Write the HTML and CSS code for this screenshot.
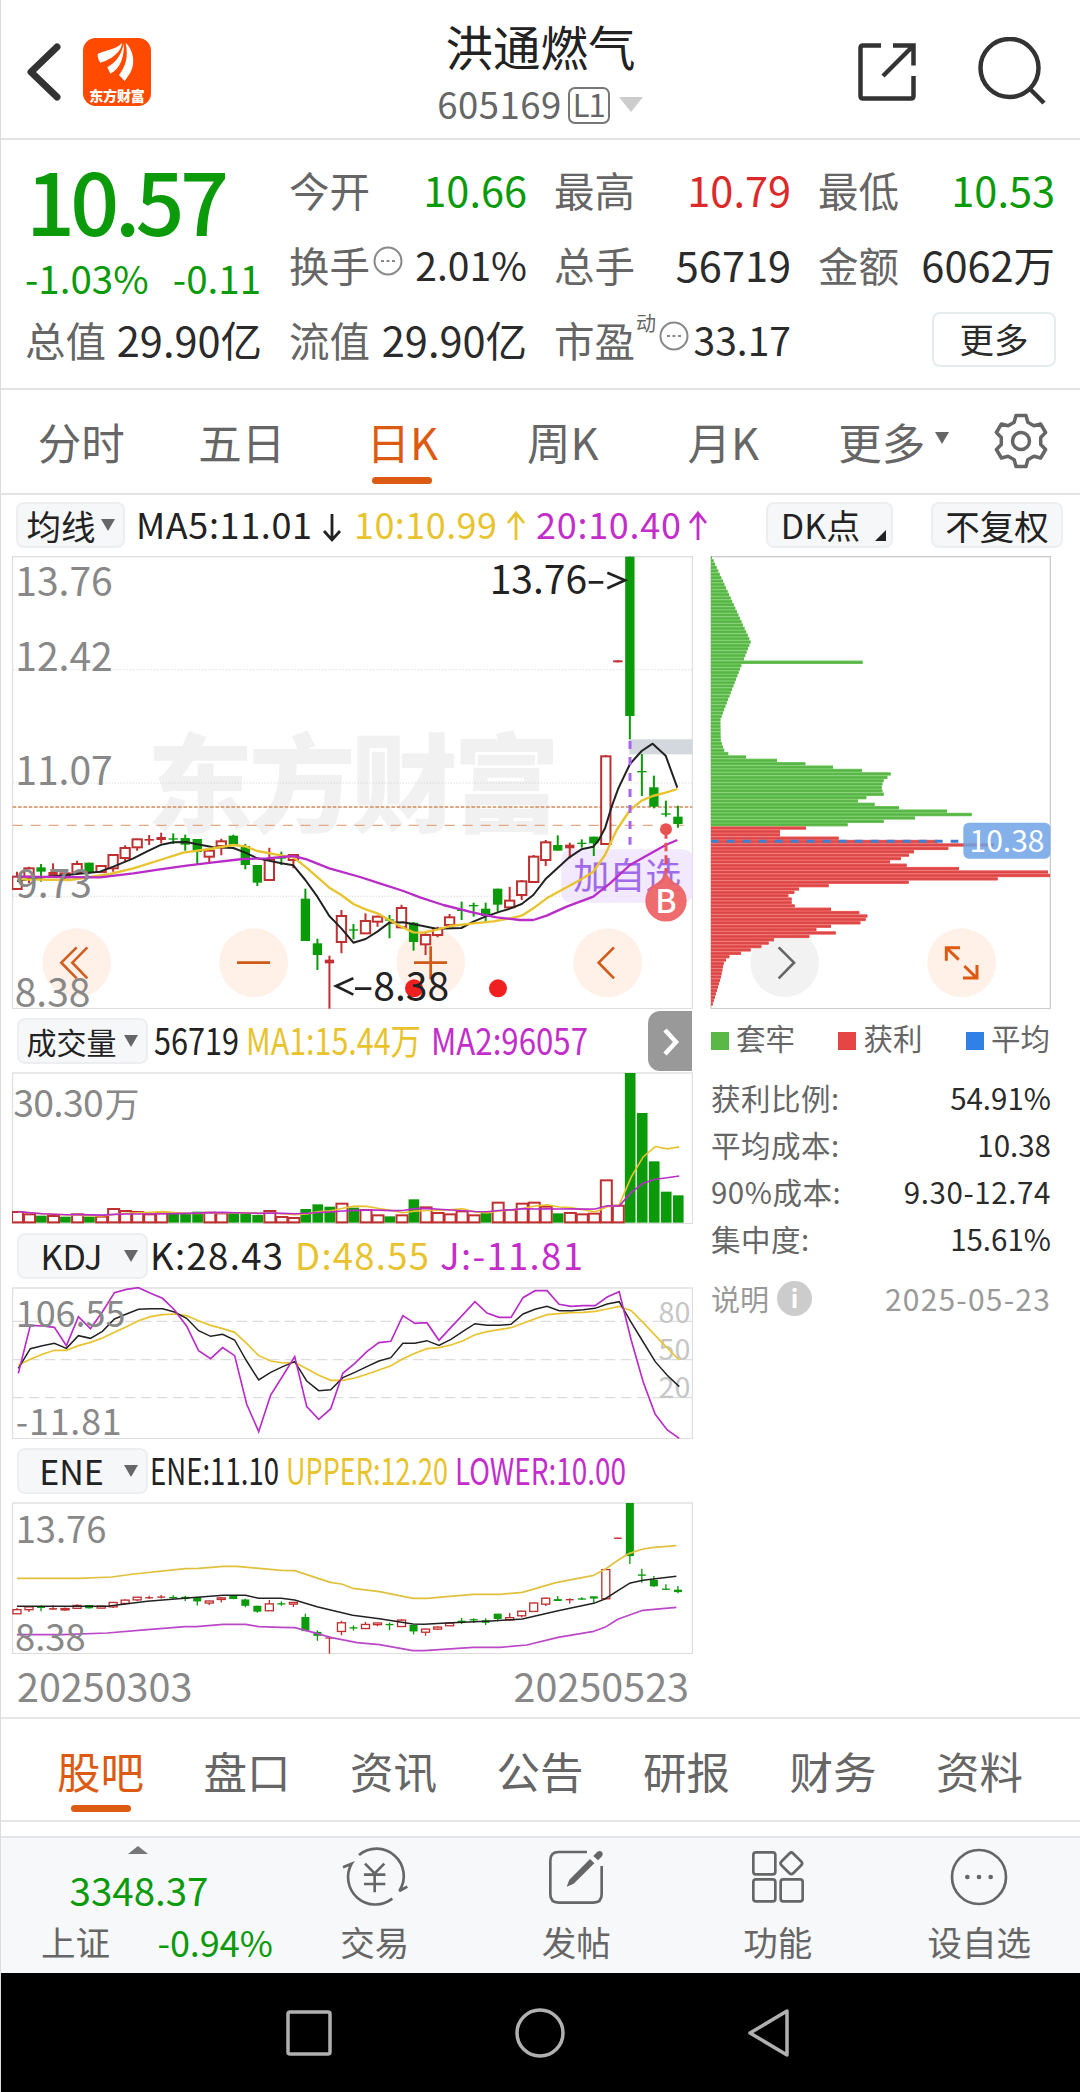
FILE: index.html
```html
<!DOCTYPE html>
<html lang="zh-CN">
<head>
    <meta charset="UTF-8">
    <title>洪通燃气 605169</title>
    <link rel="stylesheet" href="styles.css">
</head>
<body>
<div id="page">
    <div class="header">
        <div class="header-left">
            <svg class="back" viewBox="0 0 36 60"><path d="M31 5 L5 30 L31 55"/></svg>
            <svg class="logo" viewBox="250 84 204 204">
                <rect x="250" y="84" width="204" height="204" rx="38" fill="#ff4a00"/>
                <path fill="#fff" d="M294 132C320 118 345 122 367 99C366 126 332 150 302 158C296 150 294 142 294 132Z"/>
                <path fill="#fff" d="M372 100C376 135 362 178 332 191L323 172C348 158 366 135 372 100Z"/>
                <path fill="#fff" d="M378 98C402 120 408 160 392 188L375 213L358 195C380 165 386 140 378 98Z"/>
                <text x="269" y="272" font-size="42" font-weight="900" fill="#fff" textLength="166">东方财富</text>
            </svg>
        </div>
        <div class="header-title">
            <h1>洪通燃气</h1>
            <div class="code"><span>605169</span><i>L1</i><b class="down"></b></div>
        </div>
        <div class="header-right">
            <svg class="share" viewBox="0 0 58 58">
                <path d="M23 2.500H5Q2.500 2.500 2.500 5V53Q2.500 55.500 5 55.500H53Q55.500 55.500 55.500 53V33"/>
                <path d="M35 2.500H55.500V22.500M55 3L25 33"/>
            </svg>
            <svg class="search" viewBox="0 0 70 70"><circle cx="31.500" cy="31" r="29"/><path d="M52 52L66 66"/></svg>
        </div>
    </div>

    <div class="quote">
        <div class="price">
            <div class="now">10.57</div>
            <div class="change"><span>-1.03%</span><span>-0.11</span></div>
        </div>
        <div class="cell"><label>今开</label><span class="green">10.66</span></div>
        <div class="cell"><label>最高</label><span class="red">10.79</span></div>
        <div class="cell"><label>最低</label><span class="green">10.53</span></div>
        <div class="cell tight"><label>换手<svg class="dots" viewBox="0 0 30 30"><circle cx="15" cy="15" r="13.500"/><path d="M8 15h3M13.500 15h3M19 15h3"/></svg></label><span>2.01%</span></div>
        <div class="cell"><label>总手</label><span>56719</span></div>
        <div class="cell"><label>金额</label><span>6062万</span></div>
        <div class="cell"><label>总值</label><span>29.90亿</span></div>
        <div class="cell"><label>流值</label><span>29.90亿</span></div>
        <div class="cell tight"><label>市盈<sup>动</sup><svg class="dots" viewBox="0 0 30 30"><circle cx="15" cy="15" r="13.500"/><path d="M8 15h3M13.500 15h3M19 15h3"/></svg></label><span>33.17</span></div>
        <div class="cell more"><a>更多</a></div>
    </div>

    <ul class="period">
        <li>分时</li>
        <li>五日</li>
        <li class="selected">日K</li>
        <li>周K</li>
        <li>月K</li>
        <li class="other">更多<b class="down"></b></li>
        <li class="set"><svg class="gear" viewBox="-29 -29 58 58">
            <path d="M-5 -25.500H5L6.800 -18.800L12.900 -15.300L19.600 -17L24.600 -8.500L19.700 -3.500V3.500L24.600 8.500L19.600 17L12.900 15.300L6.800 18.800L5 25.500H-5L-6.800 18.800L-12.900 15.300L-19.600 17L-24.600 8.500L-19.700 3.500V-3.500L-24.600 -8.500L-19.600 -17L-12.900 -15.300L-6.800 -18.800Z"/>
            <circle r="8.500"/>
        </svg></li>
    </ul>

    <div class="toolbar">
        <a class="btn avg">均线<b class="down"></b></a>
        <svg class="legend ma" viewBox="136 0 600 62">
            <text x="135" y="45" textLength="176">MA5:11.01</text>
            <path d="M331 20V45M323 37L331 46L339 37" stroke="#222"/>
            <text x="353" y="45" textLength="143" class="yellow">10:10.99</text>
            <path d="M515 46V20M507 29L515 19L523 29" stroke="#e8c32e"/>
            <text x="535" y="45" textLength="145" class="purple">20:10.40</text>
            <path d="M697 46V20M689 29L697 19L705 29" stroke="#c32ecb"/>
        </svg>
        <a class="btn dk">DK点<b></b></a>
        <a class="btn fq">不复权</a>
    </div>

    <div class="main">
        <div class="left">
            <svg id="kline" class="chart" viewBox="36 18 2043 1359"></svg>
            <div class="sub-head">
                <a class="btn"><span>成交量</span><b class="down"></b></a>
                <svg class="legend" viewBox="148 0 500 63">
                    <text x="154" y="46" textLength="85" lengthAdjust="spacingAndGlyphs">56719</text>
                    <text x="246" y="46" textLength="175" lengthAdjust="spacingAndGlyphs" class="yellow">MA1:15.44万</text>
                    <text x="431" y="46" textLength="157" lengthAdjust="spacingAndGlyphs" class="purple">MA2:96057</text>
                </svg>
                <a class="next"><svg viewBox="0 0 44 60"><path d="M17 19L28 31L17 43"/></svg></a>
            </div>
            <svg id="volume" class="chart sub" viewBox="36 186 2043 456"></svg>
            <div class="sub-head">
                <a class="btn en"><span>KDJ</span><b class="down"></b></a>
                <svg class="legend" viewBox="148 0 500 63">
                    <text x="150" y="46" textLength="133">K:28.43</text>
                    <text x="295" y="46" textLength="134" class="yellow">D:48.55</text>
                    <text x="440" y="46" textLength="143" class="purple">J:-11.81</text>
                </svg>
            </div>
            <svg id="kdj" class="chart sub" viewBox="36 831 2043 456"></svg>
            <div class="sub-head">
                <a class="btn en"><span>ENE</span><b class="down"></b></a>
                <svg class="legend" viewBox="148 0 500 63">
                    <text x="150" y="46" textLength="129" lengthAdjust="spacingAndGlyphs">ENE:11.10</text>
                    <text x="286" y="46" textLength="162" lengthAdjust="spacingAndGlyphs" class="yellow">UPPER:12.20</text>
                    <text x="455" y="46" textLength="171" lengthAdjust="spacingAndGlyphs" class="purple">LOWER:10.00</text>
                </svg>
            </div>
            <svg id="ene" class="chart sub" viewBox="36 186 2043 456"></svg>
            <div class="dates"><span>20250303</span><span>20250523</span></div>
        </div>
        <div class="right">
            <svg id="chips" class="chart" viewBox="30 18 1023 1359"></svg>
            <div class="keys"><span><i class="k1"></i>套牢</span><span><i class="k2"></i>获利</span><span><i class="k3"></i>平均</span></div>
            <dl>
                <dt>获利比例:</dt><dd>54.91%</dd>
                <dt>平均成本:</dt><dd>10.38</dd>
                <dt>90%成本:</dt><dd class="wide">9.30-12.74</dd>
                <dt>集中度:</dt><dd>15.61%</dd>
            </dl>
            <div class="note"><span>说明<i>i</i></span><span class="day">2025-05-23</span></div>
        </div>
    </div>

    <ul class="tabs">
        <li class="selected">股吧</li>
        <li>盘口</li>
        <li>资讯</li>
        <li>公告</li>
        <li>研报</li>
        <li>财务</li>
        <li>资料</li>
    </ul>

    <div class="footer">
        <div class="index">
            <b class="up"></b>
            <div class="point">3348.37</div>
            <div class="rate"><span>上证</span><em>-0.94%</em></div>
        </div>
        <a><svg viewBox="0 0 204 180">
            <path d="M54 24A82 82 0 0 1 175 132L199 119M154 155A82 82 0 0 1 32 50L6 61"/>
            <path d="M72 50L101 79L130 50M69 83H133M69 111H133M101 79V136"/>
        </svg>交易</a>
        <a><svg viewBox="610 48 204 180">
            <path d="M745 63H660Q635 63 635 88V190Q635 215 660 215H764Q789 215 789 190V105"/>
            <path class="fill" d="M684 167L692 146L754 84L767 97L705 158ZM764 75L773 65Q782 56 790 63Q795 70 788 78L778 88Z"/>
        </svg>发帖</a>
        <a><svg viewBox="1213 50 204 180">
            <rect x="1241" y="66" width="66" height="66" rx="8"/>
            <rect x="1241" y="147" width="66" height="66" rx="8"/>
            <rect x="1323" y="147" width="66" height="66" rx="8"/>
            <rect x="1330" y="74" width="50" height="50" rx="8" transform="rotate(45 1355 99)"/>
        </svg>功能</a>
        <a><svg viewBox="0 0 204 180">
            <circle cx="102" cy="90" r="81"/>
            <path class="fill" d="M60 90a7 7 0 1 0 14 0a7 7 0 1 0 -14 0M95 90a7 7 0 1 0 14 0a7 7 0 1 0 -14 0M130 90a7 7 0 1 0 14 0a7 7 0 1 0 -14 0"/>
        </svg>设自选</a>
    </div>

    <div class="sysbar">
        <svg viewBox="0 0 50 50"><rect x="4" y="4" width="42" height="42" rx="2"/></svg>
        <svg viewBox="0 0 50 50"><circle cx="25" cy="25" r="23"/></svg>
        <svg viewBox="0 0 50 50"><path d="M4 25L41 3V47Z"/></svg>
    </div>
</div>
<script src="chart.js"></script>
</body>
</html>
```

FILE: styles.css
```css
*{
    margin: 0;
    padding: 0;
    box-sizing: border-box;
}
ul{
    list-style: none;
}
i,em{
    font-style: normal;
}
body{
    background: #fff;
    color: #2b2b2b;
    font-family: "Noto Sans CJK SC", "Noto Sans", sans-serif;
}
#page{
    width: 1080px;
    height: 2092px;
    overflow: hidden;
    border-left: 1px solid #dcdcdc;
}
svg{
    display: block;
    fill: none;
    flex: none;
}
.green{
    color: #0a9a0a;
}
.red{
    color: #dc2a2a;
}
.down{
    display: inline-block;
    border: 7px solid transparent;
    border-top: 12px solid #666;
    border-bottom: 0;
}

/* 顶部标题 */
.header{
    display: grid;
    grid-template-columns: 300px 1fr 300px;
    height: 140px;
    border-bottom: 2px solid #e3e3e3;
}
.header-left{
    display: flex;
    align-items: center;
    padding: 5px 0 0 25px;
}
.back{
    width: 36px;
    height: 60px;
    stroke: #333;
    stroke-width: 7;
    stroke-linecap: round;
    stroke-linejoin: round;
}
.logo{
    width: 68px;
    height: 68px;
    margin-left: 21px;
}
.header-title{
    text-align: center;
}
.header-title h1{
    margin-top: 14px;
    font-size: 47.500px;
    line-height: 64px;
    font-weight: normal;
    color: #222;
}
.code{
    display: flex;
    justify-content: center;
    align-items: center;
    height: 52px;
    font-size: 36.500px;
    line-height: 52px;
    letter-spacing: .5px;
    color: #666;
}
.code span{
    margin-left: -1px;
}
.code i{
    width: 42px;
    height: 37px;
    margin: 2px 0 0 6px;
    border: 2px solid #777;
    border-radius: 7px;
    font-size: 31px;
    line-height: 29px;
    letter-spacing: -1px;
}
.code .down{
    margin: 1px 0 0 9px;
    border-width: 15px 12px 0;
    border-top-color: #ccc;
}
.header-right{
    display: flex;
    align-items: center;
    gap: 62px;
    padding: 5px 0 0 78px;
}
.share,.search{
    stroke: #333;
    stroke-width: 4.500;
}
.share{
    width: 58px;
    height: 58px;
}
.search{
    width: 70px;
    height: 70px;
}

/* 报价 */
.quote{
    display: grid;
    grid-template-columns: 237px 238px 237px 237px;
    grid-auto-rows: 75px;
    column-gap: 27px;
    height: 250px;
    padding: 12px 0 0 24px;
    border-bottom: 2px solid #e3e3e3;
    font-size: 41.500px;
    line-height: 75px;
}
.price{
    grid-row: span 2;
    color: #0a9a0a;
}
.now{
    height: 95px;
    padding-left: 1px;
    font-size: 86px;
    font-weight: 500;
    line-height: 94px;
    letter-spacing: -4.700px;
}
.change{
    display: flex;
    justify-content: space-between;
    padding: 0 1px 0 0;
    font-size: 38.500px;
    line-height: 60px;
}
.cell{
    display: flex;
    justify-content: space-between;
    white-space: nowrap;
}
.cell label{
    display: flex;
    align-items: center;
    font-size: 40.500px;
    color: #666;
}
.cell sup{
    width: 20px;
    height: 62px;
    margin-left: 1px;
    font-size: 20px;
    line-height: 28px;
}
.cell.tight{
    font-size: 39px;
}
.dots{
    width: 30px;
    height: 30px;
    margin: -8px 0 0 3px;
    stroke: #888;
    stroke-width: 2;
}
.cell.more{
    justify-content: flex-end;
    align-items: center;
}
.more a{
    width: 124px;
    height: 55px;
    margin: 0 -1px 0 0;
    border: 2px solid #e6ebee;
    border-radius: 8px;
    font-size: 34.500px;
    line-height: 48px;
    text-align: center;
}

/* 周期 */
.period{
    display: flex;
    height: 105px;
    border-bottom: 2px solid #e3e3e3;
    font-size: 43.500px;
    line-height: 101px;
    color: #666;
}
.period li{
    display: flex;
    justify-content: center;
    align-items: center;
    width: 160.500px;
    height: 102px;
}
.period .down{
    margin: -6px 0 0 10px;
    border-width: 12px 7px 0;
}
.period .other{
    padding-left: 20px;
}
.period .set{
    width: 58px;
    margin-left: 28px;
}
.selected{
    position: relative;
    color: #dc5a12;
}
.selected:after{
    content: "";
    position: absolute;
    left: 50%;
    bottom: 8px;
    width: 60px;
    height: 7px;
    margin-left: -30px;
    border-radius: 4px;
    background: #dc5a12;
}
.gear{
    width: 58px;
    height: 58px;
    stroke: #666;
    stroke-width: 3.500;
    stroke-linejoin: round;
}
.toolbar{
    display: flex;
    align-items: center;
    height: 61px;
    padding: 0 15px 2px 15px;
}
.btn{
    display: flex;
    flex: none;
    justify-content: center;
    align-items: center;
    width: 131px;
    height: 46px;
    border: 2px solid #eceef0;
    border-radius: 8px;
    background: #f6f7f9;
    font-size: 30px;
    line-height: 40px;
    color: #222;
}
.btn span{
    flex: 1;
    text-align: center;
}
.btn.en{
    font-size: 34px;
}
.btn.avg{
    width: 109px;
    font-size: 34.500px;
}
.btn.avg .down{
    margin-left: 5px;
}
.btn.dk{
    position: relative;
    width: 127px;
    margin-left: 29px;
    padding-right: 18px;
    font-size: 34px;
}
.btn.dk b{
    position: absolute;
    right: 5px;
    bottom: 5px;
    border-left: 11px solid transparent;
    border-bottom: 11px solid #222;
}
.btn.fq{
    width: 132px;
    margin-left: 38px;
    font-size: 34.500px;
}
.legend{
    width: 500px;
    height: 63px;
    fill: #222;
    font-size: 36.500px;
    overflow: visible;
}
.legend path{
    fill: none;
    stroke-width: 2.800;
}
.legend.ma{
    width: 600px;
    height: 62px;
    margin-left: 12px;
    font-size: 36px;
}
.yellow{
    fill: #e8c32e;
}
.purple{
    fill: #c32ecb;
}

/* 图表 */
.main{
    display: flex;
    gap: 17px;
    height: 1161px;
    padding-left: 11px;
}
.left{
    width: 681px;
}
.chart{
    width: 681px;
    height: 453px;
}
.chart.sub{
    height: 152px;
}
.right .chart{
    width: 341px;
}
.sub-head{
    display: flex;
    align-items: center;
    height: 63px;
    padding-left: 5px;
}
.sub-head .down{
    margin-right: 8px;
}
.next{
    width: 44px;
    height: 60px;
    border-radius: 12px 0 0 12px;
    background: #999;
}
.next path{
    stroke: #fff;
    stroke-width: 4.500;
}
.dates{
    display: flex;
    justify-content: space-between;
    padding: 0 4px 0 5px;
    font-size: 39.500px;
    line-height: 61px;
    color: #888;
}
.right{
    width: 341px;
}
.keys{
    display: flex;
    justify-content: space-between;
    height: 61px;
    padding: 0 1px 0 1px;
    font-size: 29.500px;
    line-height: 56px;
    color: #666;
}
.keys i{
    display: inline-block;
    width: 18px;
    height: 18px;
    margin-right: 7px;
}
.k1{
    background: #5ab946;
}
.k2{
    background: #e64545;
}
.k3{
    background: #3080e6;
}
dl{
    display: grid;
    grid-template-columns: auto auto;
    grid-auto-rows: 47px;
    padding: 4px 0 0 1px;
    font-size: 29.500px;
    line-height: 46px;
    color: #666;
}
dt{
    letter-spacing: .5px;
}
dd{
    text-align: right;
    color: #2b2b2b;
}
dd.wide{
    letter-spacing: .6px;
}
.note{
    display: flex;
    justify-content: space-between;
    margin-top: 13px;
    padding: 0 0 0 1px;
    font-size: 29px;
    line-height: 46px;
    color: #999;
}
.note span{
    display: flex;
    align-items: center;
}
.note .day{
    font-size: 30px;
    letter-spacing: 1.200px;
}
.note i{
    width: 35px;
    height: 35px;
    margin-left: 8px;
    border-radius: 50%;
    background: #ccc;
    color: #fff;
    font-size: 25px;
    font-weight: bold;
    line-height: 32px;
    text-align: center;
}

/* 下方栏目 */
.tabs{
    display: flex;
    justify-content: space-between;
    height: 105px;
    padding: 0 57px 0 56px;
    border-top: 2px solid #e6e6e6;
    border-bottom: 2px solid #e6e6e6;
    font-size: 43.500px;
    line-height: 103px;
    color: #666;
}
.footer{
    display: flex;
    height: 137px;
    margin-top: 14px;
    border-top: 2px solid #e3e5e8;
    background: #f7f8fa;
    color: #666;
}
.footer a{
    width: 201.500px;
    font-size: 34.500px;
    line-height: 50px;
    text-align: center;
}
.footer svg{
    width: 68px;
    height: 60px;
    margin: 9px auto;
    stroke: #666;
    stroke-width: 8;
}
.footer .fill{
    fill: #666;
    stroke: none;
}
.index{
    width: 273px;
    text-align: center;
}
.index .up{
    display: block;
    width: 0;
    margin: 8px 0 0 127px;
    border: 10px solid transparent;
    border-top: 0;
    border-bottom: 8px solid #777;
}
.point{
    padding-left: 3px;
    font-size: 38.500px;
    line-height: 56px;
    margin-top: 7px;
    color: #0a9a0a;
}
.rate{
    display: flex;
    justify-content: space-between;
    padding: 0 1px 0 40px;
    font-size: 34.500px;
    line-height: 50px;
    margin-top: -1px;
}
.rate em{
    font-size: 36px;
    color: #0a9a0a;
}
.sysbar{
    display: flex;
    justify-content: center;
    align-items: center;
    gap: 181px;
    height: 120px;
    margin-left: -1px;
    background: #000;
}
.sysbar svg{
    width: 50px;
    height: 50px;
    stroke: #b0b0b0;
    stroke-width: 3.500;
    stroke-linejoin: round;
}
```

FILE: chart.js
```js
var RED = '#c03030', GREEN = '#0a9a0a';
var BLACK = '#222', YELLOW = '#e8c32e', PURPLE = '#b92cc8';

// K线: [颜色, 实体上, 实体下, 最高, 最低]
var aK = [
    ['r',980,1017,965,1020],['r',955,980,950,1000],['g',952,965,942,995],['s',966,980,940,980],
    ['r',970,982,960,990],['r',942,968,932,975],['g',938,968,938,970],['r',948,966,948,968],
    ['r',915,955,912,965],['r',894,924,886,935],['r',868,892,866,902],['s',867,872,855,885],
    ['s',861,870,848,880],['g',865,869,850,882],['g',864,884,854,902],['g',867,906,867,942],
    ['r',902,920,900,937],['r',874,888,866,916],['g',857,884,854,886],['g',888,945,882,958],
    ['g',945,998,945,1008],['r',928,990,893,992],['g',922,926,905,945],['r',915,930,912,955],
    ['g',1046,1173,1016,1173],['g',1180,1215,1166,1260],['s',1229,1240,1217,1376],['r',1098,1176,1080,1210],
    ['g',1138,1142,1122,1168],['r',1113,1150,1090,1150],['r',1100,1115,1097,1130],['g',1108,1112,1095,1165],
    ['r',1074,1132,1064,1135],['g',1118,1176,1116,1202],['r',1155,1183,1150,1215],['r',1137,1155,1130,1162],
    ['r',1102,1125,1092,1128],['g',1079,1081,1055,1110],['g',1065,1069,1058,1100],['g',1076,1098,1058,1118],
    ['g',1016,1064,1016,1085],['r',1052,1072,1010,1075],['r',994,1035,990,1050],['r',920,996,915,998],
    ['r',877,930,870,948],['g',885,902,856,902],['s',884,895,878,925],['g',878,882,868,893],
    ['g',860,880,860,918],['r',619,882,615,885],['s',331,337,331,337],['g',20,498,20,568],
    ['g',663,667,612,738],['g',712,770,677,775],['g',790,794,752,800],['g',800,822,767,833]
];
// 成交量柱顶
var aV = [605,612,617,617,620,612,620,619,596,602,605,612,609,612,612,605,607,609,609,610,615,602,620,623,597,583,590,580,
    593,599,615,619,615,568,591,608,612,603,615,607,577,599,580,577,589,610,608,612,610,510,586,189,309,454,545,556];
var sVC = 'rrgrgrgrrrrrrgggrrgggrrrgggrgrrgrgrrrrrgrrrrrgrrrrrggggg';
// KDJ
var aKv = [1075,1016,1007,1000,1015,977,985,964,927,912,898,896,896,906,925,962,979,973,990,1053,1110,1087,1070,1055,1113,1142,1139,1103,
    1087,1070,1053,1043,1000,1000,992,1006,988,964,941,946,946,943,912,898,889,902,902,899,895,882,875,937,996,1055,1096,1130];
var aDv = [1065,1048,1033,1021,1021,1007,997,984,967,950,932,920,914,912,917,932,946,956,967,1000,1037,1053,1059,1057,1076,1096,1111,1111,
    1104,1093,1080,1067,1046,1030,1016,1013,1005,992,974,965,959,953,940,926,914,911,908,907,904,897,889,902,938,976,1014,1050];
var aJv = [1090,946,948,952,1007,920,956,905,848,838,833,850,865,900,948,1022,1046,1013,1037,1182,1265,1155,1098,1040,1190,1228,1196,1090,
    1060,1025,998,994,917,940,938,991,952,914,875,909,922,922,863,842,842,883,889,887,887,861,845,990,1116,1213,1260,1285];

function x(i){
    return 51 + 36.05 * i;
}
function rect(x, y, w, h, attr){
    return '<rect x="' + x + '" y="' + y + '" width="' + w + '" height="' + h + '" ' + attr + '/>';
}
function path(d, color, w, attr){
    return '<path d="' + d + '" stroke="' + color + '" stroke-width="' + w + '" ' + (attr || '') + '/>';
}
function text(s, x, y, size, color, attr){
    return '<text x="' + x + '" y="' + y + '" font-size="' + size + '" fill="' + color + '" ' + (attr || '') + '>' + s + '</text>';
}
function line(arr, color, w){
    return path('M' + arr.map(function(y, i){ return (x(i) + 4) + ' ' + y; }).join('L'), color, w);
}
function poly(str, color, w, sx){
    return path('M' + str.split(' ').map(function(p){
        p = p.split(',');
        return p[0] * (sx || 1) + ' ' + p[1];
    }).join('L'), color, w, 'stroke-linejoin="round"');
}
function frame(y, h){
    return rect(37.500, y, 2040, h, 'stroke="#ddd" stroke-width="4"');
}
function candles(f, w, lw){
    var html = '';
    for(var i = 0; i < aK.length; i++){
        var k = aK[i], t = f(k[1]), b = f(k[2]), c = k[0] == 'g' ? GREEN : RED, cx = x(i);
        if(k[0] == 'r'){
            html += path('M' + cx + ' ' + f(k[3]) + 'V' + t + 'M' + cx + ' ' + b + 'V' + f(k[4]), c, lw);
            html += rect(cx - w / 2, t, w, Math.max(b - t, 3), 'fill="#fff" stroke="' + c + '" stroke-width="' + lw + '"');
        }else{
            html += path('M' + cx + ' ' + f(k[3]) + 'V' + f(k[4]), c, lw);
            html += rect(cx - w / 2, t, w, Math.max(b - t, 4), 'fill="' + c + '"');
        }
    }
    return html;
}
function round(cx, color){
    return '<circle cx="' + cx + '" cy="1238" r="103" fill="' + color + '"/>';
}

// 主图
function drawK(){
    var s = frame(20, 1356);
    s += text('东方财富', 440, 822, 320, '#f1f1f1', 'font-weight="900" textLength="1240"');
    s += path('M38 359H2077M38 699H2077M38 1039H2077', '#ccc', 2, 'stroke-dasharray="4 5"');
    s += path('M38 771H2077', '#d08a5e', 4, 'stroke-dasharray="11 5"');
    s += path('M38 826H2050', '#e3a985', 4, 'stroke-dasharray="30 24"');
    s += rect(1888, 568, 190, 45, 'fill="#d3d7de"');
    s += rect(1684, 898, 394, 160, 'rx="28" fill="#ecdfff" fill-opacity=".7"');
    s += round(230, '#fff0e8') + round(761, '#fff0e8') + round(1292, '#fff0e8') + round(1823, '#fff0e8');
    s += candles(function(y){ return y; }, 28, 6);
    s += text('加自选', 1720, 1017, 108, '#a06ae8');
    s += poly('51,993 100,985 200,975 268,968 300,965 340,950 400,925 440,905 484,884 520,877 560,876 592,883 640,892 700,894 736,908 772,925 844,940 880,946 916,990 952,1040 988,1098 1024,1135 1060,1178 1097,1167 1132,1145 1168,1118 1210,1117 1265,1127 1310,1136 1384,1134 1420,1115 1456,1100 1500,1085 1530,1076 1565,1062 1600,1035 1636,988 1672,955 1708,922 1744,898 1780,890 1795,872 1815,835 1835,770 1855,715 1890,642 1925,603 1958,581 1997,617 2032,713', BLACK, 6);
    s += poly('51,988 210,990 330,972 400,955 480,930 550,908 628,897 700,885 736,889 772,903 830,914 880,922 916,950 988,1013 1024,1035 1060,1062 1097,1078 1132,1090 1168,1110 1200,1128 1240,1147 1270,1148 1315,1138 1350,1128 1420,1120 1480,1114 1530,1105 1565,1097 1600,1075 1640,1045 1700,1012 1740,990 1780,965 1815,915 1850,840 1890,780 1925,752 1958,738 1997,728 2032,717', YELLOW, 7);
    s += poly('51,980 300,982 400,970 480,958 560,947 640,937 728,927 800,925 880,918 920,928 988,955 1080,981 1132,998 1210,1023 1260,1042 1330,1065 1420,1088 1490,1102 1560,1110 1600,1110 1640,1097 1700,1070 1780,1040 1830,1000 1890,945 1997,885 2032,870', PURPLE, 7);
    s += path('M1890 573V884', '#a864f0', 9, 'stroke-dasharray="24 24"');

    // 左侧价格
    s += text('13.76', 46, 137, 117, '#888') + text('12.42', 46, 362, 117, '#888');
    s += text('11.07', 46, 705, 117, '#888') + text('9.73', 48, 1043, 117, '#888');
    s += text('8.38', 44, 1371, 117, '#888');

    // 底部按钮
    s += path('M230 1192L184 1238L230 1285M262 1192L217 1238L262 1285', '#cf5f22', 8);
    s += path('M711 1238H810M1242 1238H1341M1292 1189V1288M1842 1192L1796 1238L1842 1285', '#d05a18', 8);
    s += '<circle cx="1242" cy="1315" r="27" fill="#f02020"/><circle cx="1494" cy="1315" r="27" fill="#f02020"/>';
    s += path('M1060 1285L1008 1308L1060 1334M1065 1316H1114', BLACK, 8) + text('8.38', 1120, 1352, 117, BLACK);
    s += text('13.76', 1469, 131, 117, BLACK) + path('M1766 97H1810M1822 68L1875 91L1822 115', BLACK, 8);

    // 买点
    s += path('M1998 840V970', '#e64e58', 9, 'stroke-dasharray="26 12"');
    s += '<circle cx="1998" cy="838" r="18" fill="#e85252"/>';
    s += '<path d="M1998 960Q2003 990 2040 1007A62 62 0 1 1 1956 1007Q1993 990 1998 960Z" fill="#ed6466" fill-opacity=".95"/>';
    s += text('B', 1998, 1088, 96, '#fff', 'font-weight="500" text-anchor="middle"');
    document.getElementById('kline').innerHTML = s;
}

// 成交量
function drawV(){
    var s = frame(189, 452);
    for(var i = 0; i < aV.length; i++){
        if(sVC.charAt(i) == 'r'){
            s += rect(x(i) - 15, aV[i] + 1, 33, 636 - aV[i], 'fill="#fff" stroke="' + RED + '" stroke-width="6"');
        }else{
            s += rect(x(i) - 15, aV[i], 32, 638 - aV[i], 'fill="' + GREEN + '"');
        }
    }
    function ma(n){
        return aV.map(function(v, i){
            var a = aV.slice(Math.max(0, i - n + 1), i + 1), t = 0;
            a.forEach(function(m){ t += m; });
            return t / a.length;
        });
    }
    s += line(ma(5), YELLOW, 5) + line(ma(10), PURPLE, 5);
    s += text('30.30', 40, 322, 112, '#888', 'textLength="271"') + text('万', 314, 322, 104, '#888');
    document.getElementById('volume').innerHTML = s;
}

function drawKDJ(){
    var s = frame(834, 452);
    s += path('M38 934H2077M38 1049H2077M38 1163H2077', '#ddd', 4, 'stroke-dasharray="32 16"');
    s += text('80', 2071, 939, 86, '#c6c6c6', 'text-anchor="end"');
    s += text('50', 2071, 1050, 86, '#c6c6c6', 'text-anchor="end"');
    s += text('20', 2071, 1163, 86, '#c6c6c6', 'text-anchor="end"');
    s += line(aDv, YELLOW, 5) + line(aKv, BLACK, 4.500) + line(aJv, PURPLE, 5);
    s += text('106.55', 47, 951, 108, '#888') + text('-11.81', 47, 1276, 107, '#888', 'textLength="318"');
    document.getElementById('kdj').innerHTML = s;
}

function drawENE(){
    var r = 3 / 2.24;
    var s = frame(189, 452);
    s += candles(function(y){ return 189 + (y - 20) / 3; }, 24, 4);
    s += poly('38,415 175,415 250,411 300,402 415,386 445,385 500,379 530,379 630,391 660,392 740,427 765,432 790,445 850,455 925,475 955,475 1060,463 1120,463 1170,457 1245,428 1330,406 1355,388 1385,360 1410,340 1440,327 1465,322 1515,317', '#e0c03c', 5, r);
    s += poly('38,499 240,499 330,484 420,474 500,466 550,466 580,475 630,475 660,480 710,500 790,526 850,536 925,552 950,553 1000,549 1100,543 1170,537 1250,512 1330,490 1355,477 1385,451 1410,430 1440,421 1515,409', BLACK, 4.500, r);
    s += poly('38,584 140,584 240,579 330,569 415,560 440,560 500,553 550,553 580,560 630,562 660,563 710,580 740,592 800,608 850,614 925,632 950,632 1060,622 1120,622 1180,615 1250,592 1330,574 1355,562 1385,537 1440,511 1515,502', '#bb48c8', 5, r);
    s += text('13.76', 47, 309, 109, '#888') + text('8.38', 45, 632, 109, '#888');
    document.getElementById('ene').innerHTML = s;
}

// 筹码分布
function drawChips(){
    var step = 10.15, y0 = 22, aW = [];
    var mid = [138,231,316,399,486,572,562,551,547,545,547,551,499,474,524,597,741,815,645,551,443,
        318,240,240,416,713,882,745,642,627,603,570,620,777,1044,1050,893,626,386,297,283,265,275,275,284,
        393,478,502,497,481,393,349,407,328,222,206,184,152,123,88,78];
    function fill(n, pts){
        for(var i = 0; i < n; i++){
            var y = y0 + step * aW.length;
            for(var j = 1; j < pts.length - 1 && pts[j][0] < y; j++){}
            var a = pts[j - 1], b = pts[j];
            aW.push(a[1] + (b[1] - a[1]) * (y - a[0]) / (b[0] - a[0]));
        }
    }
    fill(59, [[22,36],[275,152],[495,66],[510,61],[570,62],[600,72],[611,85]]);
    aW[31] = 488;
    aW = aW.concat(mid);
    fill(13, [[1235,73],[1245,70],[1285,62],[1376,34]]);

    var s = rect(33, 20, 1018, 1356, 'stroke="#ccc" stroke-width="4"');
    s += round(254, '#f2f2f2');
    aW.forEach(function(w, i){
        var y = y0 + step * i - step / 2, up = i < 80;
        s += rect(33, y, w - 33, step + .3, 'fill="' + (up ? '#6cc75a' : '#ee5c5c') + '"');
        s += rect(33, y + 3, w - 33, 5, 'fill="' + (up ? '#58b346' : '#d94646') + '"');
    });
    s += path('M34 874H775', '#3f7fd0', 9, 'stroke-dasharray="24 24" stroke-dashoffset="2"');
    s += rect(790, 818, 261, 108, 'rx="16" fill="#6fa3e6" fill-opacity=".85"');
    s += text('10.38', 921, 907, 90, '#fff', 'text-anchor="middle"');
    s += path('M236 1192L282 1238L236 1285', '#666', 8);
    s += round(785, '#fff0e8');
    s += path('M776 1229L740 1194M739 1232V1193H780M793 1248L829 1283M831 1245V1284H789', '#dc5a12', 9);
    document.getElementById('chips').innerHTML = s;
}

drawK();
drawV();
drawKDJ();
drawENE();
drawChips();
```
